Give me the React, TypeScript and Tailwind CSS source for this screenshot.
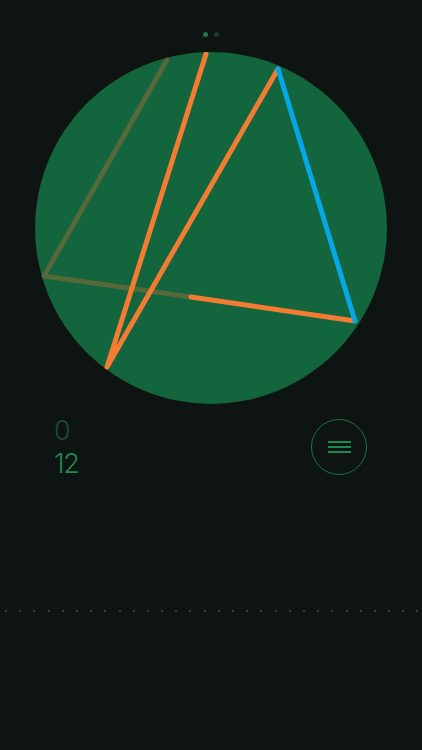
export default function App() {
  const dots = Array.from({ length: 30 }, (_, i) => i);

  return (
    <main className="min-h-screen w-full bg-[#0e1412] font-['Inter',sans-serif]">
      <div className="flex justify-center gap-[6px] pt-[32px]">
        <span className="h-[5px] w-[5px] rounded-full bg-[#1d7a47]" />
        <span className="h-[5px] w-[5px] rounded-full bg-[#1a3d2b]" />
      </div>

      <svg
        width="352"
        height="352"
        viewBox="0 0 352 352"
        className="mx-auto mt-[15px] block"
      >
        <circle cx="176" cy="176" r="176" fill="#12653c" />
        <polyline
          points="132,8 9,224 156,245"
          fill="none"
          stroke="#56693a"
          strokeWidth="5"
          strokeLinecap="round"
          strokeLinejoin="round"
        />
        <line x1="156" y1="245" x2="320" y2="269" stroke="#f47c32" strokeWidth="5" strokeLinecap="round" />
        <polyline
          points="171,2 72,315 243,17"
          fill="none"
          stroke="#f47c32"
          strokeWidth="5"
          strokeLinecap="round"
          strokeLinejoin="round"
        />
        <line x1="243" y1="17" x2="320" y2="269" stroke="#06a7e6" strokeWidth="5" strokeLinecap="round" />
      </svg>

      <div className="mt-[10px] flex items-start justify-between pl-[54px] pr-[55px]">
        <div className="flex flex-col text-[27px] font-light leading-[33px] tracking-[-1.5px]">
          <span className="text-[#1c4a32]">0</span>
          <span className="text-[#1f8a52]">12</span>
        </div>
        <button className="mt-[5px] flex h-[56px] w-[56px] flex-col items-center justify-center gap-[3px] rounded-full border border-[#1a7444]">
          <span className="h-[2px] w-[23px] bg-[#1f8a52]" />
          <span className="h-[2px] w-[23px] bg-[#1f8a52]" />
          <span className="h-[2px] w-[23px] bg-[#1f8a52]" />
        </button>
      </div>

      <div className="mt-[130px] flex gap-[12.2px] pl-[5px]">
        {dots.map((d) => (
          <span key={d} className="h-[2px] w-[2px] shrink-0 bg-[#2c4438]" />
        ))}
      </div>
    </main>
  );
}
